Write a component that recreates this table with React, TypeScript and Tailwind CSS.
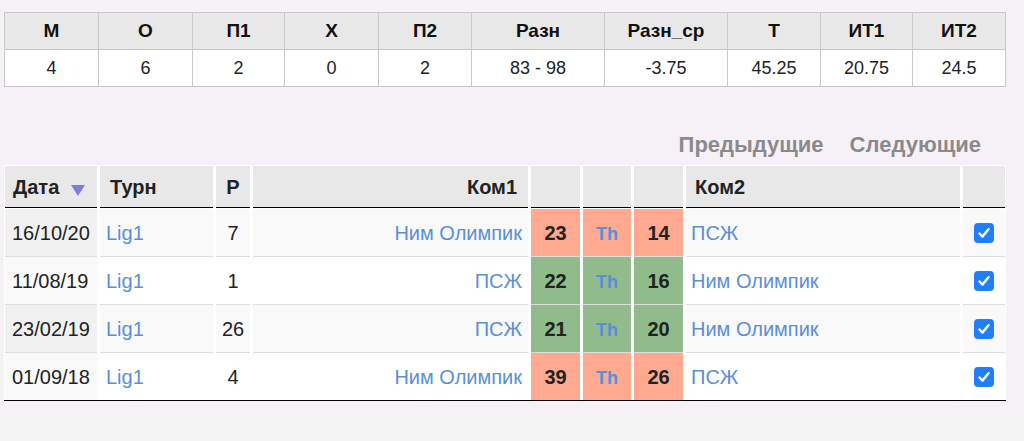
import React from "react";

const topHeaders = ["М", "О", "П1", "Х", "П2", "Разн", "Разн_ср", "Т", "ИТ1", "ИТ2"];
const topValues = ["4", "6", "2", "0", "2", "83 - 98", "-3.75", "45.25", "20.75", "24.5"];

type Row = {
  date: string;
  turn: string;
  r: string;
  k1: string;
  s1: string;
  s2: string;
  k2: string;
  win: boolean;
};

const rows: Row[] = [
  { date: "16/10/20", turn: "Lig1", r: "7", k1: "Ним Олимпик", s1: "23", s2: "14", k2: "ПСЖ", win: false },
  { date: "11/08/19", turn: "Lig1", r: "1", k1: "ПСЖ", s1: "22", s2: "16", k2: "Ним Олимпик", win: true },
  { date: "23/02/19", turn: "Lig1", r: "26", k1: "ПСЖ", s1: "21", s2: "20", k2: "Ним Олимпик", win: true },
  { date: "01/09/18", turn: "Lig1", r: "4", k1: "Ним Олимпик", s1: "39", s2: "26", k2: "ПСЖ", win: false },
];

function Check() {
  return (
    <div className="w-[20px] h-[20px] rounded-[4px] bg-[#1f7ff6] flex items-center justify-center">
      <svg width="14" height="14" viewBox="0 0 14 14">
        <path d="M2.5 7.5 L5.6 10.6 L11.5 3.3" stroke="white" strokeWidth="2.4" fill="none" strokeLinecap="round" strokeLinejoin="round" />
      </svg>
    </div>
  );
}

export default function App() {
  return (
    <div className="min-h-screen bg-[#f4f3f4]" style={{ fontFamily: '"Liberation Sans", Arial, Helvetica, sans-serif' }}>
      <div className="bg-[#f6f1f7] h-[418px] pt-[12px]">
        {/* top stats table */}
        <div className="ml-[4px] w-[1002px] border border-[#c8c8c8] bg-[#c8c8c8] grid grid-cols-[93px_93px_91px_93px_92px_132px_122px_92px_91px_92px] gap-px">
          {topHeaders.map((h) => (
            <div key={h} className="h-[36px] bg-[#e8e8e8] flex items-center justify-center font-bold text-[19px] text-[#111]">
              {h}
            </div>
          ))}
          {topValues.map((v, i) => (
            <div key={i} className="h-[36px] bg-white flex items-center justify-center text-[18px] text-[#222]">
              {v}
            </div>
          ))}
        </div>

        {/* prev / next */}
        <div className="mt-[44px] h-[26px] flex justify-end items-center gap-[26px] pr-[43px] font-bold text-[22px] text-[#8a8a8a]">
          <span>Предыдущие</span>
          <span>Следующие</span>
        </div>

        {/* games table */}
        <div className="mt-[8px] ml-[4px] w-[1002px] bg-white px-px pt-px border-b border-black grid grid-cols-[92px_113px_34px_275px_49px_48px_49px_274px_42px] gap-x-[3px] text-[20px] text-[#222]">
          <div className="h-[42px] bg-[#e8e8e8] border-b border-black flex items-center pl-[8px] font-bold">
            <span>Дата</span>
            <svg width="14" height="11" viewBox="0 0 14 11" className="ml-[12px] mt-[8px]">
              <polygon points="0,0 14,0 7,11" fill="#7d7ddf" />
            </svg>
          </div>
          <div className="h-[42px] bg-[#e8e8e8] border-b border-black flex items-center pl-[10px] font-bold">Турн</div>
          <div className="h-[42px] bg-[#e8e8e8] border-b border-black flex items-center justify-center font-bold">Р</div>
          <div className="h-[42px] bg-[#e8e8e8] border-b border-black flex items-center justify-end pr-[11px] font-bold">Ком1</div>
          <div className="h-[42px] bg-[#e8e8e8] border-b border-black" />
          <div className="h-[42px] bg-[#e8e8e8] border-b border-black" />
          <div className="h-[42px] bg-[#e8e8e8] border-b border-black" />
          <div className="h-[42px] bg-[#e8e8e8] border-b border-black flex items-center pl-[9px] font-bold">Ком2</div>
          <div className="h-[42px] bg-[#e8e8e8] border-b border-black" />

          {rows.map((r, i) => {
            const odd = i % 2 === 0;
            const bt = i === 0 ? "border-white" : "border-[#dedede]";
            const cell = odd ? "bg-[#f9f9f9]" : "bg-white";
            const sorted = odd ? "bg-[#f1f1f1]" : "bg-[#f9f9f9]";
            const score = r.win ? "bg-[#8fbc8a]" : "bg-[#fea990]";
            return (
              <React.Fragment key={i}>
                <div className={`h-[48px] border-t ${bt} ${sorted} flex items-center pl-[7px]`}>{r.date}</div>
                <div className={`h-[48px] border-t ${bt} ${cell} flex items-center pl-[6px] text-[#5a8ed9]`}>{r.turn}</div>
                <div className={`h-[48px] border-t ${bt} ${cell} flex items-center justify-center`}>{r.r}</div>
                <div className={`h-[48px] border-t ${bt} ${cell} flex items-center justify-end pr-[6px] text-[#5a8ed9]`}>{r.k1}</div>
                <div className={`h-[48px] border-t ${bt} ${score} flex items-center justify-center font-bold`}>{r.s1}</div>
                <div className={`h-[48px] border-t ${bt} ${score} flex items-center justify-center font-bold text-[#5a8ed9]`}>
                  <span>
                    <span className="text-[18px]">Th</span>
                  </span>
                </div>
                <div className={`h-[48px] border-t ${bt} ${score} flex items-center justify-center font-bold`}>{r.s2}</div>
                <div className={`h-[48px] border-t ${bt} ${cell} flex items-center pl-[5px] text-[#5a8ed9]`}>{r.k2}</div>
                <div className={`h-[48px] border-t ${bt} ${cell} flex items-center justify-center`}>
                  <Check />
                </div>
              </React.Fragment>
            );
          })}
        </div>
      </div>
    </div>
  );
}
